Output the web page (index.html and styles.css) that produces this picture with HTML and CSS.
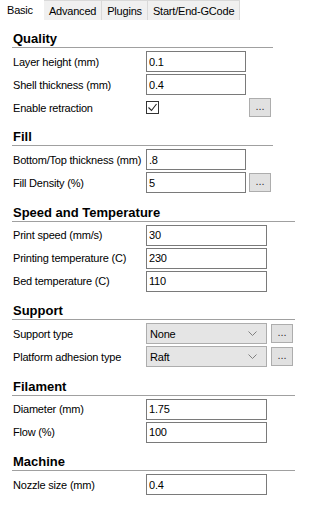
FILE: index.html
```html
<!DOCTYPE html>
<html lang="en">
<head>
    <meta charset="UTF-8">
    <meta name="viewport" content="width=device-width, initial-scale=1.0">
    <title>Print settings - Basic</title>
    <link rel="stylesheet" href="styles.css">
</head>
<body>

    <div class="tabs">
        <span class="tab active">Basic</span>
        <span class="tab">Advanced</span>
        <span class="tab">Plugins</span>
        <span class="tab">Start/End-GCode</span>
    </div>

    <div class="panel">
        <section class="group">
            <h2>Quality</h2>
            <div class="rows">
                <label>Layer height (mm)</label>
                <input type="text" value="0.1">
                <span></span>

                <label>Shell thickness (mm)</label>
                <input type="text" value="0.4">
                <span></span>

                <label>Enable retraction</label>
                <span class="check">
                    <svg width="11" height="11" viewBox="0 0 11 11"><path d="M1.5 5.5 L4.5 8.5 L9.5 2" fill="none" stroke="#222" stroke-width="1.1"/></svg>
                </span>
                <button type="button" class="more">...</button>
            </div>
        </section>

        <section class="group">
            <h2>Fill</h2>
            <div class="rows">
                <label>Bottom/Top thickness (mm)</label>
                <input type="text" value=".8">
                <span></span>

                <label>Fill Density (%)</label>
                <input type="text" value="5">
                <button type="button" class="more">...</button>
            </div>
        </section>

        <section class="group wide">
            <h2>Speed and Temperature</h2>
            <div class="rows">
                <label>Print speed (mm/s)</label>
                <input type="text" value="30">
                <span></span>

                <label>Printing temperature (C)</label>
                <input type="text" value="230">
                <span></span>

                <label>Bed temperature (C)</label>
                <input type="text" value="110">
                <span></span>
            </div>
        </section>

        <section class="group wide">
            <h2>Support</h2>
            <div class="rows">
                <label>Support type</label>
                <div class="select">
                    <span>None</span>
                    <svg width="9" height="5" viewBox="0 0 9 5"><path d="M0.5 0.5 L4.5 4.5 L8.5 0.5" fill="none" stroke="#808080" stroke-width="1"/></svg>
                </div>
                <button type="button" class="more">...</button>

                <label>Platform adhesion type</label>
                <div class="select">
                    <span>Raft</span>
                    <svg width="9" height="5" viewBox="0 0 9 5"><path d="M0.5 0.5 L4.5 4.5 L8.5 0.5" fill="none" stroke="#808080" stroke-width="1"/></svg>
                </div>
                <button type="button" class="more">...</button>
            </div>
        </section>

        <section class="group wide">
            <h2>Filament</h2>
            <div class="rows">
                <label>Diameter (mm)</label>
                <input type="text" value="1.75">
                <span></span>

                <label>Flow (%)</label>
                <input type="text" value="100">
                <span></span>
            </div>
        </section>

        <section class="group wide">
            <h2>Machine</h2>
            <div class="rows">
                <label>Nozzle size (mm)</label>
                <input type="text" value="0.4">
                <span></span>
            </div>
        </section>
    </div>

</body>
</html>
```

FILE: styles.css
```css
body {
    margin: 0;
    background-color: #fff;
    font-family: "Liberation Sans", Arial, sans-serif;
    font-size: 11px;
    letter-spacing: -0.2px;
    color: #000;
}

.tabs {
    display: flex;
    height: 20px;
}

.tab {
    display: flex;
    align-items: center;
    padding: 0 5px;
    height: 19px;
    background-color: #f0f0f0;
    border: 1px solid #d9d9d9;
    border-bottom: none;
    border-left: none;
}

.tab.active {
    background-color: #fff;
    border: none;
    padding: 0 11px 0 7px;
}

.group {
    width: 261px;
    margin-left: 12px;
}

.group.wide {
    width: 283px;
}

h2 {
    margin: 0;
    padding: 11px 0 0 1px;
    font-size: 13px;
    line-height: 16px;
    letter-spacing: 0;
    font-weight: bold;
    border-bottom: 1px solid #a0a0a0;
}

.wide h2 {
    padding-top: 11.5px;
}

.rows {
    display: grid;
    grid-template-columns: 131px 100px 22px;
    grid-auto-rows: 21px;
    column-gap: 3px;
    row-gap: 2px;
    margin-top: 3px;
    align-items: center;
}

.wide .rows {
    grid-template-columns: 130px 121px 22px;
    column-gap: 4px;
}

label {
    padding-left: 1px;
    white-space: nowrap;
}

input[type="text"] {
    box-sizing: border-box;
    width: 100%;
    height: 21px;
    margin: 0;
    padding: 0 2px;
    border: 1px solid #7a7a7a;
    font-family: inherit;
    font-size: 11px;
    letter-spacing: -0.2px;
    color: #000;
}

.check {
    box-sizing: border-box;
    display: flex;
    align-items: center;
    justify-content: center;
    width: 13px;
    height: 13px;
    border: 1px solid #333;
}

.more {
    box-sizing: border-box;
    width: 22px;
    height: 19px;
    margin: 0;
    padding: 0 0 3px;
    background-color: #e1e1e1;
    border: 1px solid #adadad;
    font-family: inherit;
    font-size: 11px;
    color: #333;
}

.select {
    box-sizing: border-box;
    display: flex;
    align-items: center;
    justify-content: space-between;
    height: 21px;
    padding: 0 9px 0 3px;
    background-color: #e5e5e5;
    border: 1px solid #adadad;
}
```
